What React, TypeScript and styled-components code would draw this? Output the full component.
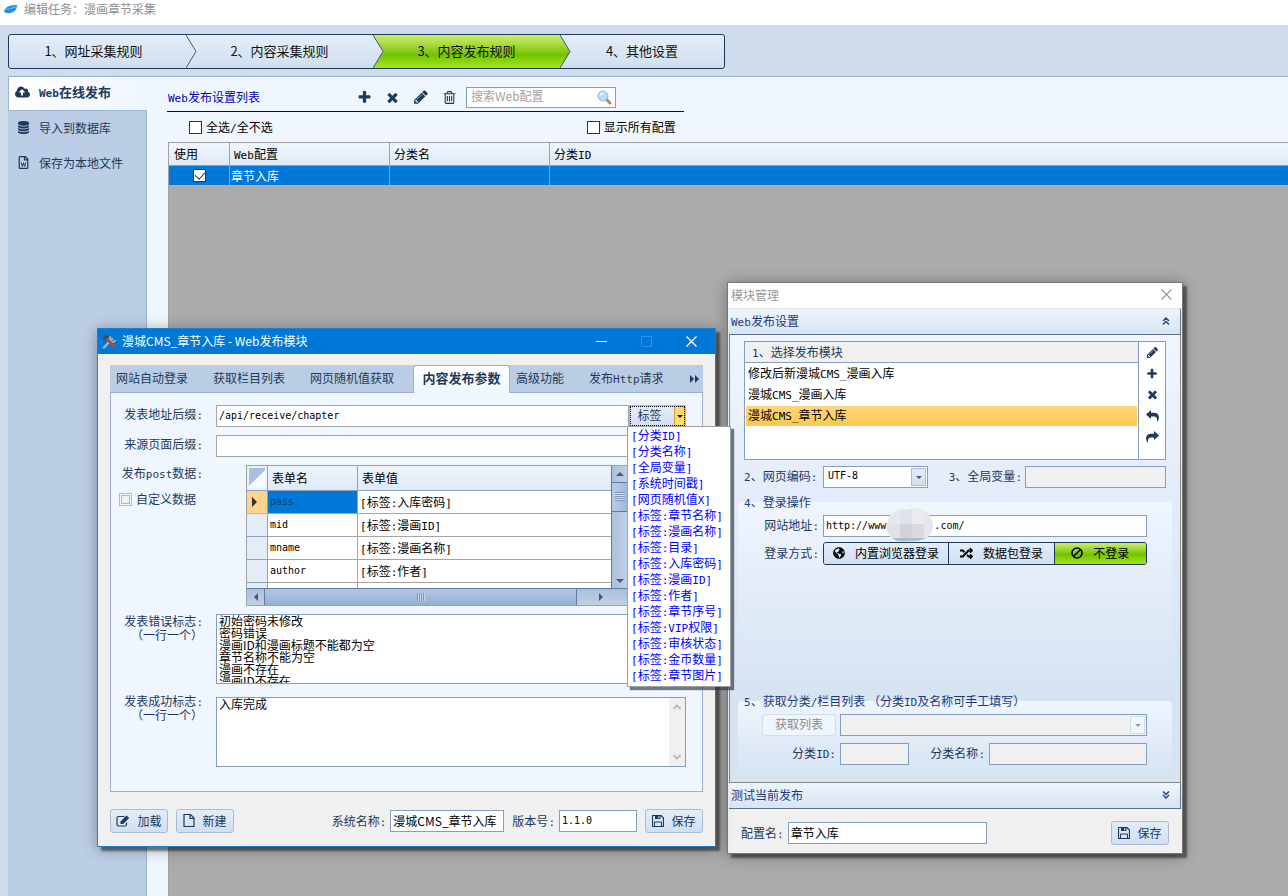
import React from "react";
import styled, { createGlobalStyle, css } from "styled-components";
import { FaGlobeAmericas, FaRandom, FaRegFileWord } from "react-icons/fa";

const navy = "#1e395b";
const line = "#9bb2cf";
const fieldLine = "#859ebf";
const sans = '"Noto Sans CJK SC", "Liberation Sans", sans-serif';
const mono = '"DejaVu Sans Mono", "Noto Sans CJK SC", monospace';

const GlobalStyle = createGlobalStyle`
  * { box-sizing: border-box; }
  body { margin: 0; font: 12px/16px ${sans}; color: ${navy}; background: #fff; }
  button, input, select, textarea { font: inherit; color: inherit; margin: 0; border-radius: 0; }
  button { padding: 0; border: 0; background: none; white-space: nowrap; }
  svg { display: block; flex: none; }
`;

/* ---------- text with half-width Latin runs ---------- */

const Latin = styled.span`
  font-family: ${mono};
  font-size: 11px;
  line-height: 1;
`;

const T = ({ children }: { children: string }) => (
  <>
    {children
      .split(/([\x21-\x7e]+)/)
      .map((part, i) => (i % 2 ? <Latin key={i}>{part}</Latin> : part))}
  </>
);

/* ---------- icons ---------- */

const glyphs = {
  plus: "M1600 736v192q0 40-28 68t-68 28h-416v416q0 40-28 68t-68 28h-192q-40 0-68-28t-28-68v-416h-416q-40 0-68-28t-28-68v-192q0-40 28-68t68-28h416v-416q0-40 28-68t68-28h192q40 0 68 28t28 68v416h416q40 0 68 28t28 68z",
  times:
    "M1490 1322q0 40-28 68l-136 136q-28 28-68 28t-68-28l-294-294-294 294q-28 28-68 28t-68-28l-136-136q-28-28-28-68t28-68l294-294-294-294q-28-28-28-68t28-68l136-136q28-28 68-28t68 28l294 294 294-294q28-28 68-28t68 28l136 136q28 28 28 68t-28 68l-294 294 294 294q28 28 28 68z",
  pencil:
    "M491 1536l91-91-235-235-91 91v107h128v128h107zm523-928q0-22-22-22-10 0-17 7l-542 542q-7 7-7 17 0 22 22 22 10 0 17-7l542-542q7-7 7-17zm-54-192l416 416-832 832h-416v-416zm683 96q0 53-37 90l-166 166-416-416 166-165q36-38 90-38 53 0 91 38l235 234q37 39 37 91z",
  trash:
    "M704 736v576q0 14-9 23t-23 9h-64q-14 0-23-9t-9-23v-576q0-14 9-23t23-9h64q14 0 23 9t9 23zm256 0v576q0 14-9 23t-23 9h-64q-14 0-23-9t-9-23v-576q0-14 9-23t23-9h64q14 0 23 9t9 23zm256 0v576q0 14-9 23t-23 9h-64q-14 0-23-9t-9-23v-576q0-14 9-23t23-9h64q14 0 23 9t9 23zm128 724v-948h-896v948q0 22 7 40.5t14.5 27 10.5 8.5h832q3 0 10.5-8.5t14.5-27 7-40.5zm-672-1076h448l-48-117q-7-9-17-11h-317q-10 2-17 11zm928 32v64q0 14-9 23t-23 9h-96v948q0 83-47 143.5t-113 60.5h-832q-66 0-113-58.5t-47-141.5v-952h-96q-14 0-23-9t-9-23v-64q0-14 9-23t23-9h309l70-167q15-37 54-63t79-26h320q40 0 79 26t54 63l70 167h309q14 0 23 9t9 23z",
  database:
    "M896 768q237 0 443-43t325-127v170q0 69-103 128t-280 93.5-385 34.5-385-34.5-280-93.5-103-128v-170q119 84 325 127t443 43zm0 768q237 0 443-43t325-127v170q0 69-103 128t-280 93.5-385 34.5-385-34.5-280-93.5-103-128v-170q119 84 325 127t443 43zm0-384q237 0 443-43t325-127v170q0 69-103 128t-280 93.5-385 34.5-385-34.5-280-93.5-103-128v-170q119 84 325 127t443 43zm0-1152q208 0 385 34.5t280 93.5 103 128v128q0 69-103 128t-280 93.5-385 34.5-385-34.5-280-93.5-103-128v-128q0-69 103-128t280-93.5 385-34.5z",
  cloud:
    "M1216 864q0-14-9-23l-352-352q-9-9-23-9t-23 9l-351 351q-10 12-10 24 0 14 9 23t23 9h224v352q0 13 9.5 22.5t22.5 9.5h192q13 0 22.5-9.5t9.5-22.5v-352h224q13 0 22.5-9.5t9.5-22.5zm640 288q0 159-112.5 271.5t-271.5 112.5h-1088q-185 0-316.5-131.5t-131.5-316.5q0-130 70-240t188-165q-2-30-2-43 0-212 150-362t362-150q156 0 285.5 87t188.5 231q71-62 166-62 106 0 181 75t75 181q0 76-41 138 130 31 213.5 135.5t83.5 238.5z",
};

const Glyph = ({ name, size = 14 }: { name: keyof typeof glyphs; size?: number }) => (
  <svg
    width={size}
    height={size}
    viewBox={name === "cloud" ? "-64 0 1920 1792" : "0 0 1792 1792"}
    fill="currentColor"
    aria-hidden="true"
  >
    <path d={glyphs[name]} />
  </svg>
);

const TurnArrow = ({ flip = false }: { flip?: boolean }) => (
  <svg width="13" height="12" viewBox="0 0 13 12" fill="currentColor" aria-hidden="true">
    <path
      transform={flip ? "translate(13 0) scale(-1 1)" : undefined}
      d="M0 4.500L5 0V2.700H8.500C12 2.900 13.200 5.500 12.900 8C12.600 9.800 11.900 10.900 11 12C11.400 9 11 6.600 8 6.400H5V9Z"
    />
  </svg>
);

const BanIcon = () => (
  <svg width="12" height="12" viewBox="0 0 12 12" fill="none" stroke="currentColor" strokeWidth="1.600" aria-hidden="true">
    <circle cx="6" cy="6" r="5" />
    <path d="M2.500 9.500L9.500 2.500" />
  </svg>
);

const SaveIcon = () => (
  <svg width="12" height="12" viewBox="0 0 12 12" fill="none" stroke="currentColor" aria-hidden="true">
    <path d="M0.500 0.500H9L11.500 3V11.500H0.500Z" strokeWidth="1.200" />
    <path d="M3 0.500H8.500V4H3Z" fill="currentColor" stroke="none" />
    <path d="M6.200 1.200H7.400V3.300H6.200Z" fill="#dfe9f6" stroke="none" />
    <path d="M2.500 11.500V7H9.500V11.500" />
  </svg>
);

const FileIcon = () => (
  <svg width="12" height="13" viewBox="0 0 12 13" fill="none" stroke="currentColor" strokeWidth="1.200" aria-hidden="true">
    <path d="M1 0.500H7.500L11 4V12.500H1Z" />
    <path d="M7 0.500V4.500H11" />
  </svg>
);

const EditIcon = () => (
  <svg width="14" height="12" viewBox="0 0 14 12" fill="none" aria-hidden="true">
    <path
      d="M8.500 1.500H2.500Q1 1.500 1 3V9.500Q1 11 2.500 11H9Q10.500 11 10.500 9.500V7.500"
      stroke="currentColor"
      strokeWidth="1.200"
    />
    <path d="M4.500 9V6.500L10.500 0.500L13.200 3L7.200 9Z" fill="currentColor" />
  </svg>
);

const Magnifier = () => (
  <svg width="15" height="15" viewBox="0 0 15 15" aria-hidden="true">
    <path d="M9 9L13 13" stroke="#b98a57" strokeWidth="3" strokeLinecap="round" />
    <circle cx="6" cy="6" r="5" fill="#b9dcf8" stroke="#8db2dc" />
    <path d="M3 5.500Q4 3 7 3" stroke="#eef8ff" strokeWidth="1.500" fill="none" />
  </svg>
);

const AppLogo = () => (
  <svg width="14" height="11" viewBox="0 0 14 11" aria-hidden="true">
    <path d="M0 8Q0.500 4.500 4 2.500Q7 0.500 13.500 1Q12.500 3 12.500 4.500Q11 8 7.500 8.800Q4 10 0 8Z" fill="#1f8fe6" />
    <path d="M0.500 5.500Q5 5.500 13 2.500" stroke="#6fc0f7" fill="none" />
  </svg>
);

const ToolsLogo = () => (
  <svg width="15" height="15" viewBox="0 0 15 15" fill="none" aria-hidden="true">
    <path d="M2 13.500L10 5" stroke="#9fb4c6" strokeWidth="2.500" strokeLinecap="round" />
    <path d="M9 2.500A3 3 0 1 0 13.500 6" stroke="#9fb4c6" strokeWidth="2" />
    <path d="M5 5L13 13" stroke="#c8412c" strokeWidth="2.500" strokeLinecap="round" />
    <path d="M1 5.500L6 1.500" stroke="#4b4b55" strokeWidth="3" />
  </svg>
);

const CloseMark = ({ size = 11 }: { size?: number }) => (
  <svg width={size} height={size} viewBox="0 0 11 11" aria-hidden="true">
    <path d="M0.500 0.500L10.500 10.500M10.500 0.500L0.500 10.500" stroke="currentColor" strokeWidth="1.200" />
  </svg>
);

const DoubleChevron = ({ down = false }: { down?: boolean }) => (
  <svg width="8" height="8" viewBox="0 0 8 8" fill="none" aria-hidden="true">
    <path
      transform={down ? "translate(0 8) scale(1 -1)" : undefined}
      d="M1 4L4 1L7 4M1 7.500L4 4.500L7 7.500"
      stroke="#2c4a86"
      strokeWidth="1.500"
    />
  </svg>
);

const Caret = styled.span<{ $dir: "up" | "down" | "left" | "right"; $size?: number; $color?: string }>`
  width: 0;
  height: 0;
  flex: none;
  border: ${(p) => p.$size ?? 4}px solid transparent;
  ${(p) => {
    const c = p.$color ?? "#45597c";
    if (p.$dir === "up") return css`border-bottom-color: ${c}; border-top: 0;`;
    if (p.$dir === "down") return css`border-top-color: ${c}; border-bottom: 0;`;
    if (p.$dir === "left") return css`border-right-color: ${c}; border-left: 0;`;
    return css`border-left-color: ${c}; border-right: 0;`;
  }}
`;

/* ---------- form parts ---------- */

const Field = styled.input<{ $mono?: boolean; $line?: string }>`
  height: 22px;
  min-width: 0;
  width: 100%;
  padding: 0 2px 2px;
  border: 1px solid ${(p) => p.$line ?? fieldLine};
  background: #fff;
  color: #000;
  font-family: ${(p) => (p.$mono ? mono : sans)};
  font-size: ${(p) => (p.$mono ? 10 : 12)}px;
  line-height: 18px;
  &:disabled { background: #f0f0f0; }
`;

const CheckLabel = styled.label`
  display: flex;
  align-items: center;
  gap: 4px;
`;

const Tick = styled.input<{ $soft?: boolean }>`
  appearance: none;
  flex: none;
  width: 13px;
  height: 13px;
  border: 1px solid ${(p) => (p.$soft ? "#a9bcd6" : "#333")};
  background: ${(p) => (p.$soft ? "#f0f0ee" : "#fff")};
  box-shadow: ${(p) => (p.$soft ? "inset 0 0 0 1px #f4f8fd, inset 0 0 0 2px #b5b5b5" : "none")};
  position: relative;
  &:checked::after {
    content: "";
    position: absolute;
    left: 3px;
    top: 0;
    width: 5px;
    height: 8px;
    border: solid #333;
    border-width: 0 1px 1px 0;
    transform: rotate(42deg);
  }
`;

const PushButton = styled.button`
  display: flex;
  align-items: center;
  justify-content: center;
  gap: 7px;
  width: 58px;
  height: 24px;
  padding-bottom: 1px;
  border: 1px solid #abbad6;
  border-radius: 3px;
  background: linear-gradient(#e3edf9, #d0dfef);
  color: ${navy};
  &:disabled { border-color: #cfdff0; background: #eef5fc; color: #8d8d8d; }
`;

const FetchButton = styled(PushButton)`
  width: 74px;
  height: 22px;
  justify-self: end;
  padding-bottom: 2px;
`;

const SelectBox = styled.div`
  position: relative;
  display: flex;
`;

const Select = styled.select`
  appearance: none;
  width: 100%;
  height: 22px;
  padding: 0 4px 2px;
  border: 1px solid ${fieldLine};
  background: #fff;
  color: #000;
  font-family: ${mono};
  font-size: 10px;
  opacity: 1;
  &:disabled { background: #f0f0f0; }
`;

const SelectArrow = styled.span<{ $off?: boolean }>`
  position: absolute;
  top: 2px;
  right: 2px;
  bottom: 2px;
  width: 15px;
  display: flex;
  align-items: center;
  justify-content: center;
  border: 1px solid ${(p) => (p.$off ? "#cfdff0" : "#abbad6")};
  background: ${(p) => (p.$off ? "#eff6fc" : "linear-gradient(#e3edf9, #d0dfef)")};
  pointer-events: none;
`;

/* ---------- main page ---------- */

const Page = styled.div`
  position: relative;
  min-height: 100vh;
  display: flex;
  flex-direction: column;
  background: #cfdcec;
  overflow: hidden;
`;

const AppTitle = styled.header`
  display: flex;
  align-items: flex-start;
  gap: 6px;
  height: 25px;
  padding: 1px 4px;
  background: #fff;
  color: #8f8f8f;
  svg { margin-top: 3px; }
`;

const Steps = styled.nav`
  display: flex;
  width: 717px;
  height: 35px;
  margin: 9px 8px 7px;
  border: 1px solid ${navy};
  border-radius: 3px;
  background: linear-gradient(#e3eefa, #cfdeee);
`;

const Step = styled.button<{ $active?: boolean; $width: number; $first?: boolean }>`
  position: relative;
  width: ${(p) => p.$width}px;
  padding: 0 ${(p) => (p.$first ? 8 : 0)}px 2px 0;
  font-size: 13px;
  line-height: 18px;
  color: #111;
  background: ${(p) =>
    p.$active ? "linear-gradient(#cdee6c, #a6d93c 30%, #74c200 60%, #a4e61c)" : "transparent"};
  > svg { position: absolute; left: 0; top: 0; }
`;

const StepArrow = ({ fill }: { fill: string }) => (
  <svg width="11" height="33" viewBox="0 0 11 33" aria-hidden="true">
    <defs>
      <linearGradient id="stepBlue" x1="0" y1="0" x2="0" y2="1">
        <stop offset="0" stopColor="#e3eefa" />
        <stop offset="1" stopColor="#cfdeee" />
      </linearGradient>
      <linearGradient id="stepGreen" x1="0" y1="0" x2="0" y2="1">
        <stop offset="0" stopColor="#cdee6c" />
        <stop offset="0.3" stopColor="#a6d93c" />
        <stop offset="0.6" stopColor="#74c200" />
        <stop offset="1" stopColor="#a4e61c" />
      </linearGradient>
    </defs>
    <path d="M0 0L10 16.500L0 33Z" fill={`url(#${fill})`} />
    <path d="M0 0L10 16.500L0 33" fill="none" stroke="#41597a" />
  </svg>
);

const Body = styled.div`
  flex: 1;
  display: flex;
  margin-left: 8px;
  border-top: 1px solid ${line};
  background: #eff6fe;
`;

const Side = styled.nav`
  flex: none;
  width: 139px;
  background: #bccee6;
  border-right: 1px solid ${line};
`;

const SideItem = styled.button<{ $active?: boolean }>`
  display: flex;
  align-items: center;
  gap: 9px;
  width: 138px;
  height: 35px;
  padding: 0 0 2px 9px;
  ${(p) =>
    p.$active &&
    css`
      width: 139px;
      height: 34px;
      padding: 0 0 3px 6px;
      border-left: 1px solid ${line};
      border-bottom: 1px solid ${line};
      background: linear-gradient(90deg, #fff, #eff6fe);
      font-size: 13px;
      font-weight: 700;
    `}
`;

const Main = styled.main`
  flex: 1;
  min-width: 0;
  display: flex;
  flex-direction: column;
  padding-left: 20px;
`;

const ListBar = styled.div`
  display: flex;
  align-items: center;
  width: 517px;
  height: 35px;
  padding-top: 6px;
  border-bottom: 1px solid #0000a0;
`;

const ListTitle = styled.h1`
  width: 189px;
  margin: 0 0 0 1px;
  font-size: 12px;
  font-weight: 400;
  color: #0000c0;
`;

const ListTools = styled.div`
  display: flex;
  gap: 13px;
  margin-right: 9px;
  color: ${navy};
`;

const SearchBox = styled.div`
  display: flex;
  align-items: center;
  width: 150px;
  height: 21px;
  padding: 0 3px 0 2px;
  border: 1px solid ${fieldLine};
  background: #fff;
`;

const SearchField = styled.input`
  flex: 1;
  min-width: 0;
  border: 0;
  padding: 0 2px 2px;
  background: none;
  line-height: 16px;
  &::placeholder { color: #a3a3a3; }
`;

const FilterBar = styled.div`
  display: flex;
  align-items: center;
  height: 30px;
  padding-left: 22px;
  gap: 314px;
  color: #000;
`;

const TableArea = styled.div`
  flex: 1;
  margin-left: 1px;
  border-left: 1px solid #a0a0a0;
  border-top: 1px solid #a0a0a0;
  background: #ababab;
`;

const ConfigTable = styled.table`
  width: 100%;
  table-layout: fixed;
  border-collapse: separate;
  border-spacing: 0;
  th {
    height: 23px;
    padding: 0 5px;
    text-align: left;
    font-weight: 400;
    color: #000;
    background: linear-gradient(#f0f6fd, #dfe9f6);
    border-bottom: 1px solid #8aa3c2;
  }
  td {
    height: 20px;
    padding: 0 1px;
    line-height: 16px;
    color: #fff;
    background: #0078d7;
    border-bottom: 1px solid #a8b4c4;
  }
  th + th { border-left: 1px solid #8aa3c2; padding: 0 4px; }
  td + td { border-left: 1px solid #8aa3c2; }
  input { display: block; margin: 0 auto; }
`;

/* ---------- windows ---------- */

const windowShadow = css`
  box-shadow: 4px 4px 2px rgba(0, 0, 0, 0.45), 0 2px 14px rgba(0, 0, 0, 0.35);
`;

const ModuleWindow = styled.section`
  position: absolute;
  left: 97px;
  top: 328px;
  width: 619px;
  border: 1px solid #1c7fcb;
  background: #f0f0f0;
  ${windowShadow}
`;

const WindowTitle = styled.header`
  display: flex;
  align-items: center;
  height: 25px;
  padding: 0 18px 0 4px;
  background: #0078d7;
  color: #fff;
  h2 { flex: 1; margin: 0; padding: 0 0 1px 5px; font-size: 12px; font-weight: 400; }
`;

const WindowButton = styled.button`
  display: flex;
  justify-content: center;
  width: 45px;
  color: #fff;
  &:last-child { width: 11px; margin-left: 17px; }
`;

const WindowBody = styled.div`
  padding: 11px 12px 13px;
`;

const Tabs = styled.div`
  display: flex;
  height: 28px;
  background: #bbcce5;
  border-bottom: 1px solid ${line};
`;

const Tab = styled.button<{ $active?: boolean }>`
  padding: 0 19px 2px 6px;
  color: ${navy};
  ${(p) =>
    p.$active &&
    css`
      width: 97px;
      height: 28px;
      padding: 0 0 4px;
      border: 1px solid ${line};
      border-bottom: 0;
      border-radius: 3px 3px 0 0;
      background: linear-gradient(#fff, #eff6fe);
      font-size: 13px;
      font-weight: 700;
    `}
`;

const TabScroll = styled.button`
  display: flex;
  align-items: center;
  gap: 1px;
  margin-left: auto;
  padding: 0 4px;
`;

const TabPanel = styled.div`
  display: flex;
  flex-direction: column;
  gap: 8px;
  padding: 12px 16px 24px 8px;
  border: 1px solid ${line};
  border-top: 0;
  background: #eff6fe;
`;

const FormRow = styled.div<{ $spaced?: boolean }>`
  display: grid;
  grid-template-columns: 84px 1fr;
  column-gap: 13px;
  ${(p) =>
    p.$spaced &&
    css`
      margin-top: 2px;
      > div { margin-top: 3px; }
    `}
`;

const FormLabel = styled.label<{ $stack?: boolean }>`
  text-align: right;
  white-space: pre-line;
  line-height: ${(p) => (p.$stack ? 14 : 18)}px;
`;

const SideLabels = styled.div`
  display: flex;
  flex-direction: column;
  gap: 10px;
  line-height: 16px;
  > span { text-align: right; }
`;

const WithTag = styled.div`
  display: flex;
`;

const TagButton = styled.button`
  flex: none;
  display: flex;
  width: 57px;
  height: 22px;
  outline: 1px dotted #000;
  outline-offset: -2px;
  border: 1px solid #abbad6;
  background: linear-gradient(#e3edf9, #d0dfef);
  color: ${navy};
  > span:first-child { flex: 1; padding-right: 5px; line-height: 18px; }
`;

const TagArrow = styled.span`
  display: flex;
  align-items: center;
  justify-content: center;
  width: 11px;
  height: 20px;
  border: 1px solid #cf9f36;
  background: linear-gradient(#fbd67c, #ffe06a);
`;

const GridBox = styled.div`
  width: 383px;
  margin-left: 30px;
  border: 1px solid #a0a0a0;
  background: #b4c8e0;
`;

const GridTop = styled.div`
  display: flex;
  height: 122px;
`;

const GridScroll = styled.div`
  flex: 1;
  overflow: hidden;
  background: #fff;
`;

const FormTable = styled.table`
  width: 100%;
  table-layout: fixed;
  border-collapse: separate;
  border-spacing: 0;
  color: #000;
  th, td { text-align: left; font-weight: 400; padding: 0 2px; line-height: 16px; }
  thead th {
    height: 25px;
    padding: 0 4px;
    background: linear-gradient(#eef4fc, #dfe9f7);
    border-bottom: 1px solid #8aa3c2;
    border-right: 1px solid #8aa3c2;
  }
  thead th:last-child { border-right: 0; }
  thead th:first-child { padding: 2px; background: #eaf1fa; }
  tbody th { height: 23px; background: #e4ecf7; border-right: 1px solid #8aa3c2; border-bottom: 1px solid #8aa3c2; }
  tbody td { height: 23px; border-bottom: 1px solid #a5a5a5; }
  tbody td:nth-child(2) {
    border-right: 1px solid #a5a5a5;
    font-family: ${mono};
    font-size: 10px;
  }
`;

const ActiveHead = styled.th`
  && { background: #ffd58c; padding: 0 0 0 5px; border-bottom-color: #f0b04e; }
`;

const ActiveCell = styled.td`
  && { background: #0078d7; color: ${navy}; }
`;

const RowCaret = styled(Caret)`
  display: block;
`;

const VScroll = styled.div`
  display: flex;
  flex-direction: column;
  align-items: center;
  justify-content: space-between;
  width: 17px;
  padding: 6px 0 5px;
  border-left: 1px solid #5f7ba3;
  background: linear-gradient(90deg, #aac0dc, #c0d1e6);
`;

const VTop = styled.div`
  display: flex;
  flex-direction: column;
  align-items: center;
  gap: 6px;
`;

const VThumb = styled.div`
  width: 16px;
  height: 30px;
  padding: 9px 3px;
  border: solid #5f7ba3;
  border-width: 1px 0;
  background: linear-gradient(90deg, #b9cce5, #9fb7d5);
  &::after {
    content: "";
    display: block;
    height: 9px;
    background: repeating-linear-gradient(#8098b8 0 1px, #d5e1f0 1px 2px);
  }
`;

const HScroll = styled.div`
  display: flex;
  align-items: center;
  height: 17px;
  border-top: 1px solid #5f7ba3;
  background: linear-gradient(#aac0dc, #c0d1e6);
`;

const HLead = styled.span`
  width: 17px;
  display: flex;
  justify-content: center;
`;

const HThumb = styled.div`
  display: flex;
  align-items: center;
  justify-content: center;
  width: 313px;
  height: 16px;
  margin-right: 22px;
  border: solid #5f7ba3;
  border-width: 0 1px;
  background: linear-gradient(#b3c8e3, #95afd2);
  &::after {
    content: "";
    width: 8px;
    height: 8px;
    background: repeating-linear-gradient(90deg, #8098b8 0 1px, #c5d5ea 1px 2px);
  }
`;

const TextBox = styled.div`
  display: flex;
  height: 70px;
  border: 1px solid ${fieldLine};
  background: #fff;
`;

const TextArea = styled.textarea`
  flex: 1;
  padding: 0 2px;
  border: 0;
  resize: none;
  overflow: hidden;
  background: none;
  color: #000;
  line-height: 12px;
`;

const TextScroll = styled.div`
  display: flex;
  flex-direction: column;
  align-items: center;
  justify-content: space-between;
  width: 16px;
  padding: 6px 0;
  background: #f0f0f0;
`;

const ScrollTip = ({ down = false }: { down?: boolean }) => (
  <svg width="8" height="6" viewBox="0 0 8 6" aria-hidden="true">
    <path d={down ? "M0.500 1L4 4.500L7.500 1" : "M0.500 5L4 1.500L7.500 5"} fill="none" stroke="#b9b9b9" strokeWidth="2" />
  </svg>
);

const WindowFooter = styled.footer`
  display: flex;
  align-items: center;
  gap: 8px;
  padding-top: 17px;
`;

const FooterField = styled.label<{ $width: number; $push?: boolean }>`
  display: flex;
  align-items: center;
  gap: 4px;
  white-space: nowrap;
  margin-left: ${(p) => (p.$push ? "auto" : 0)};
  > input { width: ${(p) => p.$width}px; }
`;

const TagMenu = styled.ul`
  position: absolute;
  z-index: 5;
  left: 627px;
  top: 426px;
  width: 104px;
  margin: 0;
  padding: 0 3px 3px;
  list-style: none;
  border: 1px solid #a0a0a0;
  background: #fff;
  color: #0000ff;
  white-space: nowrap;
  box-shadow: 3px 3px 1px rgba(40, 50, 70, 0.65);
`;

/* ---------- module manager ---------- */

const ManagerWindow = styled.section`
  position: absolute;
  left: 727px;
  top: 282px;
  width: 456px;
  border: 1px solid #777;
  background: #f0f0f0;
  ${windowShadow}
`;

const ManagerTitle = styled.header`
  display: flex;
  align-items: center;
  justify-content: space-between;
  height: 26px;
  padding: 0 10px 2px 3px;
  border-bottom: 1px solid #e2e2e2;
  background: #fff;
  color: #999;
  h2 { margin: 0; font-size: 12px; font-weight: 400; }
`;

const FoldHeader = styled.button`
  display: flex;
  align-items: center;
  justify-content: space-between;
  width: 452px;
  height: 26px;
  margin: 0 1px;
  padding: 0 10px 1px 2px;
  border-right: 1px solid #5d6f88;
  border-bottom: 1px solid #5d6f88;
  background: linear-gradient(#eef5fd, #d7e4f2);
  color: #1c3a78;
`;

const FoldBody = styled.div`
  margin: 0 1px;
  padding: 6px 14px;
  border: solid #858585;
  border-width: 0 1px 1px;
  background: linear-gradient(#eff6fe, #e5ecf9 35%, #d6e4f2 80%);
`;

const ModuleList = styled.div`
  display: flex;
  height: 119px;
  border: 1px solid ${fieldLine};
  background: #fff;
`;

const ModuleItems = styled.div`
  flex: 1;
  border-right: 1px solid ${fieldLine};
  > h3 {
    margin: 0;
    height: 21px;
    padding-left: 7px;
    border-bottom: 1px solid ${fieldLine};
    background: #f0f0f0;
    font-size: 12px;
    font-weight: 400;
    line-height: 19px;
  }
`;

const ModuleItem = styled.button<{ $active?: boolean }>`
  display: block;
  width: calc(100% - 2px);
  height: 20px;
  margin: 1px;
  padding: 0 0 2px 2px;
  text-align: left;
  line-height: 16px;
  color: #000;
  background: ${(p) => (p.$active ? "linear-gradient(#fdd67c, #fbc850)" : "none")};
`;

const ModuleTools = styled.div`
  display: flex;
  flex-direction: column;
  width: 26px;
  > button {
    display: flex;
    align-items: center;
    justify-content: center;
    height: 21px;
    color: ${navy};
  }
`;

const SplitRow = styled.div`
  display: grid;
  grid-template-columns: 76px 105px 97px 1fr;
  align-items: center;
  margin-top: 6px;
  > label { text-align: right; white-space: nowrap; padding-bottom: 2px; }
  > label:first-child { text-align: left; }
  > input { margin-left: 3px; width: calc(100% - 3px); }
  > div { margin-left: 3px; width: 105px; }
`;

const Group = styled.fieldset<{ $height: number }>`
  min-width: 0;
  min-height: ${(p) => p.$height}px;
  margin: 5px -6px 0;
  padding: 4px 24px 8px 0;
  border: 1px solid transparent;
  border-radius: 4px;
  background: linear-gradient(#eff6fe, #e5edf9 40%, #d6e4f2) border-box;
  legend { height: 18px; padding: 0 0 0 5px; color: #1c3a78; line-height: 17px; }
`;

const GroupRow = styled.div<{ $cols: string; $top?: number }>`
  display: grid;
  grid-template-columns: ${(p) => p.$cols};
  column-gap: 4px;
  align-items: center;
  margin-top: ${(p) => p.$top ?? 0}px;
  > label, > span { text-align: right; white-space: nowrap; padding-bottom: 2px; }
`;

const MaskedField = styled.div`
  position: relative;
  > svg { position: absolute; left: 63px; top: -7px; }
`;

const Segments = styled.div`
  display: flex;
  height: 23px;
  border: 1px solid ${navy};
  border-radius: 3px;
  overflow: hidden;
`;

const Segment = styled.button<{ $grow: number; $active?: boolean }>`
  flex: ${(p) => p.$grow} 0 0;
  display: flex;
  align-items: center;
  justify-content: center;
  gap: 10px;
  padding-bottom: 1px;
  color: #000;
  background: ${(p) =>
    p.$active
      ? "linear-gradient(#cdee6c, #74c200 55%, #a4e61c)"
      : "linear-gradient(#e3eefa, #cfdeee)"};
  & + & { border-left: 1px solid ${navy}; }
`;

const ManagerFooter = styled.footer`
  display: flex;
  align-items: center;
  justify-content: space-between;
  padding: 12px 13px 8px;
`;

const Mask = () => (
  <svg width="48" height="36" viewBox="0 0 48 36" aria-hidden="true">
    <defs>
      <clipPath id="maskShape">
        <path d="M1 20Q0 9 8 4Q16 0 20 2Q32 -2 39 3Q46 8 47 17Q47 28 38 31Q28 34 23 33Q12 35 6 30Q1 26 1 20Z" />
      </clipPath>
    </defs>
    <g clipPath="url(#maskShape)">
      <rect width="48" height="36" fill="#e4e8ec" />
      <rect x="14" y="0" width="12" height="16" fill="#dfe2e8" />
      <rect x="26" y="0" width="12" height="16" fill="#ebebee" />
      <rect x="14" y="16" width="12" height="14" fill="#d0d3db" />
      <rect x="26" y="16" width="12" height="14" fill="#d8dae0" />
      <rect y="16" width="14" height="14" fill="#dfe3e8" />
      <rect y="30" width="48" height="6" fill="#aebdcd" />
    </g>
  </svg>
);

const tags = [
  "[分类ID]",
  "[分类名称]",
  "[全局变量]",
  "[系统时间戳]",
  "[网页随机值X]",
  "[标签:章节名称]",
  "[标签:漫画名称]",
  "[标签:目录]",
  "[标签:入库密码]",
  "[标签:漫画ID]",
  "[标签:作者]",
  "[标签:章节序号]",
  "[标签:VIP权限]",
  "[标签:审核状态]",
  "[标签:金币数量]",
  "[标签:章节图片]",
];

const postRows = [
  ["mid", "[标签:漫画ID]"],
  ["mname", "[标签:漫画名称]"],
  ["author", "[标签:作者]"],
  ["", ""],
];

const errorMarks = [
  "初始密码未修改",
  "密码错误",
  "漫画ID和漫画标题不能都为空",
  "章节名称不能为空",
  "漫画不存在",
  "漫画ID不存在",
].join("\n");

export default function App() {
  return (
    <Page>
      <GlobalStyle />
      <AppTitle>
        <AppLogo />
        编辑任务：漫画章节采集
      </AppTitle>
      <Steps>
        <Step $width={177} $first>1、网址采集规则</Step>
        <Step $width={187}>
          <StepArrow fill="stepBlue" />
          2、内容采集规则
        </Step>
        <Step $width={187} $active>
          <StepArrow fill="stepBlue" />
          3、内容发布规则
        </Step>
        <Step $width={164}>
          <StepArrow fill="stepGreen" />
          4、其他设置
        </Step>
      </Steps>

      <Body>
        <Side>
          <SideItem $active>
            <Glyph name="cloud" size={15} />
            <span><T>Web在线发布</T></span>
          </SideItem>
          <SideItem>
            <Glyph name="database" size={13} />
            导入到数据库
          </SideItem>
          <SideItem>
            <FaRegFileWord size={13} />
            保存为本地文件
          </SideItem>
        </Side>

        <Main>
          <ListBar>
            <ListTitle><T>Web发布设置列表</T></ListTitle>
            <ListTools>
              <button aria-label="添加"><Glyph name="plus" size={15} /></button>
              <button aria-label="删除"><Glyph name="times" size={15} /></button>
              <button aria-label="编辑"><Glyph name="pencil" size={16} /></button>
              <button aria-label="清空"><Glyph name="trash" size={15} /></button>
            </ListTools>
            <SearchBox>
              <SearchField aria-label="搜索" placeholder="搜索Web配置" />
              <Magnifier />
            </SearchBox>
          </ListBar>
          <FilterBar>
            <CheckLabel>
              <Tick type="checkbox" />
              <span><T>全选/全不选</T></span>
            </CheckLabel>
            <CheckLabel>
              <Tick type="checkbox" />
              显示所有配置
            </CheckLabel>
          </FilterBar>
          <TableArea>
            <ConfigTable>
              <colgroup>
                <col width="60" />
                <col width="160" />
                <col width="160" />
                <col />
              </colgroup>
              <thead>
                <tr>
                  <th>使用</th>
                  <th><T>Web配置</T></th>
                  <th>分类名</th>
                  <th><T>分类ID</T></th>
                </tr>
              </thead>
              <tbody>
                <tr>
                  <td><Tick type="checkbox" defaultChecked aria-label="使用" /></td>
                  <td>章节入库</td>
                  <td />
                  <td />
                </tr>
              </tbody>
            </ConfigTable>
          </TableArea>
        </Main>
      </Body>

      <ManagerWindow>
        <ManagerTitle>
          <h2>模块管理</h2>
          <button aria-label="关闭"><CloseMark /></button>
        </ManagerTitle>
        <FoldHeader>
          <span><T>Web发布设置</T></span>
          <DoubleChevron />
        </FoldHeader>
        <FoldBody>
          <ModuleList>
            <ModuleItems>
              <h3><T>1、选择发布模块</T></h3>
              <ModuleItem><T>修改后新漫城CMS_漫画入库</T></ModuleItem>
              <ModuleItem><T>漫城CMS_漫画入库</T></ModuleItem>
              <ModuleItem $active><T>漫城CMS_章节入库</T></ModuleItem>
            </ModuleItems>
            <ModuleTools>
              <button aria-label="编辑"><Glyph name="pencil" size={13} /></button>
              <button aria-label="添加"><Glyph name="plus" size={12} /></button>
              <button aria-label="删除"><Glyph name="times" size={13} /></button>
              <button aria-label="撤销"><TurnArrow /></button>
              <button aria-label="重做"><TurnArrow flip /></button>
            </ModuleTools>
          </ModuleList>
          <SplitRow>
            <label htmlFor="encoding"><T>2、网页编码:</T></label>
            <SelectBox>
              <Select id="encoding"><option>UTF-8</option></Select>
              <SelectArrow><Caret $dir="down" $size={3} /></SelectArrow>
            </SelectBox>
            <label htmlFor="globals"><T>3、全局变量:</T></label>
            <Field id="globals" disabled />
          </SplitRow>
          <Group $height={194}>
            <legend><T>4、登录操作</T></legend>
            <GroupRow $cols="80px 1fr">
              <label htmlFor="site"><T>网站地址:</T></label>
              <MaskedField>
                <Field id="site" $mono defaultValue="http://www        .com/" />
                <Mask />
              </MaskedField>
            </GroupRow>
            <GroupRow $cols="80px 1fr" $top={5}>
              <span><T>登录方式:</T></span>
              <Segments>
                <Segment $grow={125}><FaGlobeAmericas size={12} />内置浏览器登录</Segment>
                <Segment $grow={105}><FaRandom size={13} />数据包登录</Segment>
                <Segment $grow={92} $active><BanIcon />不登录</Segment>
              </Segments>
            </GroupRow>
          </Group>
          <Group $height={84}>
            <legend><T>5、获取分类/栏目列表 （分类ID及名称可手工填写）</T></legend>
            <GroupRow $cols="97px 1fr">
              <FetchButton disabled>获取列表</FetchButton>
              <SelectBox>
                <Select disabled aria-label="分类列表" />
                <SelectArrow $off><Caret $dir="down" $size={3} $color="#999" /></SelectArrow>
              </SelectBox>
            </GroupRow>
            <GroupRow $cols="97px 69px 72px 1fr" $top={7}>
              <label htmlFor="catId"><T>分类ID:</T></label>
              <Field id="catId" disabled />
              <label htmlFor="catName"><T>分类名称:</T></label>
              <Field id="catName" disabled />
            </GroupRow>
          </Group>
        </FoldBody>
        <FoldHeader>
          测试当前发布
          <DoubleChevron down />
        </FoldHeader>
        <ManagerFooter>
          <FooterField $width={199}>
            <span><T>配置名:</T></span>
            <Field defaultValue="章节入库" />
          </FooterField>
          <PushButton><SaveIcon />保存</PushButton>
        </ManagerFooter>
      </ManagerWindow>

      <ModuleWindow>
        <WindowTitle>
          <ToolsLogo />
          <h2>漫城CMS_章节入库 - Web发布模块</h2>
          <WindowButton aria-label="最小化">
            <svg width="11" height="11" viewBox="0 0 11 11"><path d="M0 5.500H11" stroke="#fff" /></svg>
          </WindowButton>
          <WindowButton aria-label="最大化" disabled>
            <svg width="11" height="11" viewBox="0 0 11 11"><path d="M0.500 0.500H10.500V10.500H0.500Z" fill="none" stroke="#2f91df" /></svg>
          </WindowButton>
          <WindowButton aria-label="关闭"><CloseMark /></WindowButton>
        </WindowTitle>
        <WindowBody>
          <Tabs role="tablist">
            <Tab role="tab">网站自动登录</Tab>
            <Tab role="tab">获取栏目列表</Tab>
            <Tab role="tab">网页随机值获取</Tab>
            <Tab role="tab" $active aria-selected>内容发布参数</Tab>
            <Tab role="tab">高级功能</Tab>
            <Tab role="tab"><T>发布Http请求</T></Tab>
            <TabScroll aria-label="更多">
              <Caret $dir="right" $color={navy} />
              <Caret $dir="right" $color={navy} />
            </TabScroll>
          </Tabs>
          <TabPanel>
            <FormRow>
              <FormLabel htmlFor="postUrl"><T>发表地址后缀:</T></FormLabel>
              <WithTag>
                <Field id="postUrl" $mono $line="#a5a5a5" defaultValue="/api/receive/chapter" />
                <TagButton>
                  <span>标签</span>
                  <TagArrow><Caret $dir="down" $size={3} $color="#222" /></TagArrow>
                </TagButton>
              </WithTag>
            </FormRow>
            <FormRow>
              <FormLabel htmlFor="refUrl"><T>来源页面后缀:</T></FormLabel>
              <Field id="refUrl" $mono $line="#a5a5a5" />
            </FormRow>
            <FormRow>
              <SideLabels>
                <span><T>发布post数据:</T></span>
                <CheckLabel>
                  <Tick type="checkbox" $soft />
                  自定义数据
                </CheckLabel>
              </SideLabels>
              <GridBox>
                <GridTop>
                  <GridScroll>
                    <FormTable>
                      <colgroup>
                        <col width="21" />
                        <col width="90" />
                        <col />
                      </colgroup>
                      <thead>
                        <tr>
                          <th aria-label="行">
                            <svg width="16" height="20" viewBox="0 0 16 20">
                              <path d="M0 0H16V20H0Z" fill="#f6f9fd" />
                              <path d="M0 0H16V2L0 18Z" fill="#a9bfdb" />
                            </svg>
                          </th>
                          <th>表单名</th>
                          <th>表单值</th>
                        </tr>
                      </thead>
                      <tbody>
                        <tr>
                          <ActiveHead aria-label="当前行"><RowCaret $dir="right" $size={5} $color="#333" /></ActiveHead>
                          <ActiveCell>pass</ActiveCell>
                          <td><T>[标签:入库密码]</T></td>
                        </tr>
                        {postRows.map(([name, value], i) => (
                          <tr key={i}>
                            <th />
                            <td>{name}</td>
                            <td><T>{value}</T></td>
                          </tr>
                        ))}
                      </tbody>
                    </FormTable>
                  </GridScroll>
                  <VScroll>
                    <VTop>
                      <Caret $dir="up" />
                      <VThumb />
                    </VTop>
                    <Caret $dir="down" />
                  </VScroll>
                </GridTop>
                <HScroll>
                  <HLead><Caret $dir="left" /></HLead>
                  <HThumb />
                  <Caret $dir="right" />
                </HScroll>
              </GridBox>
            </FormRow>
            <FormRow>
              <FormLabel $stack htmlFor="errMarks"><T>{"发表错误标志:\n（一行一个）"}</T></FormLabel>
              <TextBox>
                <TextArea id="errMarks" defaultValue={errorMarks} />
              </TextBox>
            </FormRow>
            <FormRow $spaced>
              <FormLabel $stack htmlFor="okMarks"><T>{"发表成功标志:\n（一行一个）"}</T></FormLabel>
              <TextBox>
                <TextArea id="okMarks" defaultValue="入库完成" />
                <TextScroll>
                  <ScrollTip />
                  <ScrollTip down />
                </TextScroll>
              </TextBox>
            </FormRow>
          </TabPanel>
          <WindowFooter>
            <PushButton><EditIcon />加载</PushButton>
            <PushButton><FileIcon />新建</PushButton>
            <FooterField $width={114} $push>
              <span><T>系统名称:</T></span>
              <Field defaultValue="漫城CMS_章节入库" />
            </FooterField>
            <FooterField $width={78}>
              <span><T>版本号:</T></span>
              <Field $mono defaultValue="1.1.0" />
            </FooterField>
            <PushButton><SaveIcon />保存</PushButton>
          </WindowFooter>
        </WindowBody>
      </ModuleWindow>

      <TagMenu>
        {tags.map((tag) => (
          <li key={tag}><T>{tag}</T></li>
        ))}
      </TagMenu>
    </Page>
  );
}
